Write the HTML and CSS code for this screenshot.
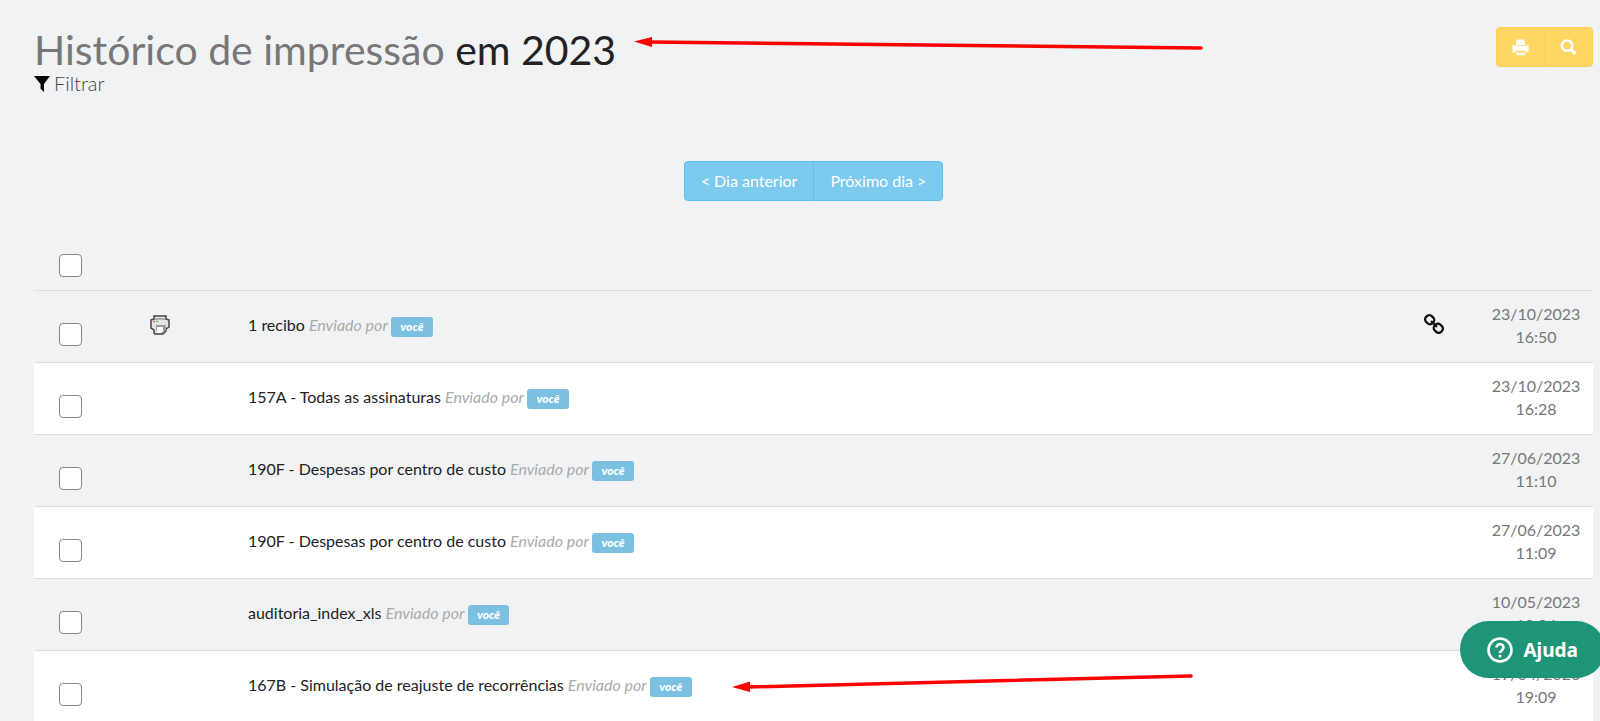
FILE: index.html
```html
<!DOCTYPE html>
<html lang="pt-BR">
<head>
  <meta charset="UTF-8">
  <meta name="viewport" content="width=device-width, initial-scale=1.0">
  <title>Histórico de impressão</title>
  <link rel="stylesheet" href="styles.css">
</head>
<body>

  <main class="container">
    <header class="page-header">
      <div>
        <h1><span>Histórico de impressão</span> em 2023</h1>
        <a class="filter" href="#">
          <svg width="16" height="16" viewBox="0 0 16 16"><path d="M0 0h16L10 8v8L6.500 12.500V8z"/></svg>
          Filtrar
        </a>
      </div>
      <div class="btn-group tools">
        <button type="button" aria-label="Imprimir">
          <svg width="17" height="17" viewBox="0 0 18 18" fill="#fff"><path d="M5 0.500h8l1.300 6H3.700zM0.500 6.500h2.500v1h12v-1h2.500v7.500h-3.500v-1.500H4V14H0.500zM4.500 14.200h9v3h-9z"/></svg>
        </button>
        <button type="button" aria-label="Buscar">
          <svg width="17" height="17" viewBox="0 0 18 18" fill="none" stroke="#fff"><circle cx="7.500" cy="7" r="5.500" stroke-width="2.600"/><path d="M11.500 11l5 4.800" stroke-width="3.600"/></svg>
        </button>
      </div>
    </header>

    <nav class="days">
      <div class="btn-group">
        <button type="button">&lt; Dia anterior</button>
        <button type="button">Próximo dia &gt;</button>
      </div>
    </nav>

    <table class="history">
      <thead>
        <tr>
          <th class="check"><input type="checkbox" aria-label="Selecionar todos"></th>
          <th class="type"></th>
          <th></th>
          <th class="link"></th>
          <th class="date"></th>
        </tr>
      </thead>
      <tbody>
        <tr>
          <td class="check"><input type="checkbox" aria-label="Selecionar 1 recibo"></td>
          <td class="type">
            <svg width="20" height="20" viewBox="0 0 20 20">
              <path d="M4 1h12v3l3 1v7l-3 2v2l-3 3H5l-1-1v-3l-3-2V5l3-1z" fill="#e4e4e4" stroke="#444" stroke-width="1.500"/>
              <path d="M4 4h12" stroke="#777"/>
              <path d="M6 10h10v5l-3 3H7l-1-4z" fill="#999"/>
              <path d="M7 12h6v4l-2 2H7z" fill="#fafafa"/>
              <path d="M3 6.500h2" stroke="#e66" stroke-width="1.500"/>
              <path d="M6 6.500h2" stroke="#6c5" stroke-width="1.500"/>
            </svg>
          </td>
          <td>1 recibo <em>Enviado por <span class="label">você</span></em></td>
          <td class="link">
            <a href="#" aria-label="Link">
              <svg width="20" height="20" viewBox="0 0 20 20" fill="none" stroke="#111" stroke-width="2.300"><rect x="-4.500" y="-4" width="9" height="8" rx="3.500" transform="translate(5.700 5.700) rotate(45)"/><rect x="-4.500" y="-4" width="9" height="8" rx="3.500" transform="translate(14.300 14.300) rotate(45)"/><path d="M7 7l6 6"/></svg>
            </a>
          </td>
          <td class="date">23/10/2023 16:50</td>
        </tr>
        <tr>
          <td class="check"><input type="checkbox" aria-label="Selecionar 157A"></td>
          <td class="type"></td>
          <td>157A - Todas as assinaturas <em>Enviado por <span class="label">você</span></em></td>
          <td class="link"></td>
          <td class="date">23/10/2023 16:28</td>
        </tr>
        <tr>
          <td class="check"><input type="checkbox" aria-label="Selecionar 190F"></td>
          <td class="type"></td>
          <td>190F - Despesas por centro de custo <em>Enviado por <span class="label">você</span></em></td>
          <td class="link"></td>
          <td class="date">27/06/2023 11:10</td>
        </tr>
        <tr>
          <td class="check"><input type="checkbox" aria-label="Selecionar 190F"></td>
          <td class="type"></td>
          <td>190F - Despesas por centro de custo <em>Enviado por <span class="label">você</span></em></td>
          <td class="link"></td>
          <td class="date">27/06/2023 11:09</td>
        </tr>
        <tr>
          <td class="check"><input type="checkbox" aria-label="Selecionar auditoria_index_xls"></td>
          <td class="type"></td>
          <td>auditoria_index_xls <em>Enviado por <span class="label">você</span></em></td>
          <td class="link"></td>
          <td class="date">10/05/2023 18:04</td>
        </tr>
        <tr>
          <td class="check"><input type="checkbox" aria-label="Selecionar 167B"></td>
          <td class="type"></td>
          <td>167B - Simulação de reajuste de recorrências <em>Enviado por <span class="label">você</span></em></td>
          <td class="link"></td>
          <td class="date">19/04/2023 19:09</td>
        </tr>
      </tbody>
    </table>
  </main>

  <!-- setas de destaque -->
  <svg class="arrow arrow-title" width="570" height="20" viewBox="0 0 570 20"><path d="M16 10L567 16" stroke="#f00" stroke-width="3.500" stroke-linecap="round"/><path d="M0 9.500L18 5v10z" fill="#f00"/></svg>
  <svg class="arrow arrow-row" width="462" height="20" viewBox="0 0 462 20"><path d="M16 14L459 3" stroke="#f00" stroke-width="3.500" stroke-linecap="round"/><path d="M0 14L18 8.500v10.500z" fill="#f00"/></svg>

  <button type="button" class="help">
    <svg width="26" height="26" viewBox="0 0 26 26" fill="none" stroke="#fff" stroke-width="2.600"><circle cx="13" cy="13" r="11.500"/><path d="M9.500 10.500a3.500 3.300 0 1 1 5.500 2.600c-1.500 1-2 1.500-2 3"/><path d="M13 17.800v2.600"/></svg>
    Ajuda
  </button>

</body>
</html>
```
FILE: styles.css
```css
* {
  box-sizing: border-box;
}

body {
  margin: 0;
  position: relative;
  overflow-x: hidden;
  background: #f0f2f4;
  color: #222;
  font-family: Lato, "Liberation Sans", sans-serif;
  font-size: 16px;
  line-height: 23px;
}

svg {
  display: block;
}

.container {
  padding: 27px 7px 0 34px;
}

.page-header {
  display: flex;
  justify-content: space-between;
  align-items: flex-start;
}

h1 {
  margin: 0;
  font-size: 41px;
  font-weight: 400;
  line-height: 45px;
}

h1 span {
  color: #777;
}

.filter {
  display: flex;
  align-items: center;
  gap: 4px;
  color: #444;
  font-size: 20px;
  font-weight: 300;
  line-height: 23px;
  text-decoration: none;
}

.btn-group {
  display: flex;
}

.btn-group button {
  height: 40px;
  padding: 0 16px 2px;
  border: 1px solid #5bc0ee;
  background: #7ccaee;
  color: #fff;
  font: inherit;
  cursor: pointer;
}

.btn-group button:first-child {
  border-radius: 4px 0 0 4px;
}

.btn-group button:last-child {
  margin-left: -1px;
  border-radius: 0 4px 4px 0;
}

.tools button {
  padding: 0 15px;
  border-color: #ffd04d;
  background: #ffd664;
}

.days {
  display: flex;
  justify-content: center;
  margin-top: 66px;
}

.history {
  width: 100%;
  margin-top: 40px;
  border-collapse: collapse;
}

.history th {
  height: 49px;
  padding: 0;
}

.history td {
  height: 72px;
  padding: 0 0 2px;
  border-top: 1px solid #dcdee0;
}

.history tbody tr:nth-child(even) {
  background: #fff;
}

.history .check {
  width: 107px;
  padding-left: 25px;
  text-align: left;
}

.history td.check {
  padding-top: 16px;
  padding-bottom: 0;
}

.history .type {
  width: 107px;
  padding-left: 9px;
}

.history .link {
  width: 55px;
}

.history td.link {
  padding-bottom: 4px;
}

.history .date {
  width: 114px;
  padding: 0 12px 2px;
  color: #777;
  text-align: center;
}

input[type="checkbox"] {
  display: block;
  appearance: none;
  width: 23px;
  height: 23px;
  margin: 0;
  border: 1px solid #888;
  border-radius: 4px;
  background: #fff;
}

em {
  color: #aaa;
}

.label {
  display: inline-block;
  padding: 0 9px;
  border-radius: 3px;
  background: #7bc0e0;
  color: #fff;
  font-size: 12px;
  font-weight: 900;
  line-height: 20px;
}

.arrow {
  position: absolute;
  pointer-events: none;
}

.arrow-title {
  top: 32px;
  left: 634px;
}

.arrow-row {
  top: 673px;
  left: 732px;
}

.help {
  position: fixed;
  right: -5px;
  bottom: 43px;
  display: flex;
  align-items: center;
  gap: 10px;
  height: 57px;
  padding: 0 27px;
  border: 0;
  border-radius: 29px;
  background: #1f9577;
  color: #fff;
  font: bold 19px "Noto Sans", sans-serif;
  cursor: pointer;
}
```
